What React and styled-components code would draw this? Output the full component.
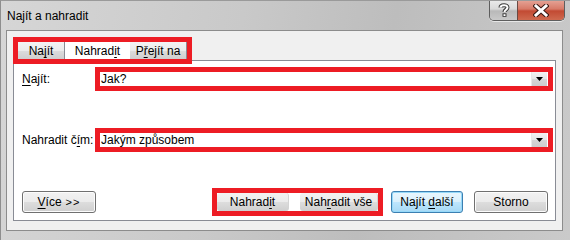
import React from 'react';
import styled, { createGlobalStyle } from 'styled-components';

const GlobalStyle = createGlobalStyle`
  body {
    margin: 0;
    font-family: "Liberation Sans", Arial, sans-serif;
    font-size: 12px;
    color: #000;
  }
`;

const RED = '#ed1c24';

const Window = styled.div`
  width: 570px;
  height: 240px;
  box-sizing: border-box;
  background: linear-gradient(100deg, #d6d6d6 0%, #c9c9c9 40%, #bdbdbd 65%, #cacaca 100%);
  border-left: 1px solid #8e8e8e;
  border-top: 1px solid #9a9a9a;
  display: flex;
  flex-direction: column;
  overflow: hidden;
`;

const TitleBar = styled.div`
  height: 29px;
  display: flex;
  justify-content: space-between;
  align-items: flex-start;
`;

const Title = styled.div`
  padding: 8px 0 0 6px;
  font-size: 12px;
  color: #000;
`;

const Caption = styled.div`
  display: flex;
  margin-right: 5px;
  margin-top: -1px;
  border: 1px solid #5e5e5e;
  border-top: none;
  border-radius: 0 0 5px 5px;
  overflow: hidden;
  box-shadow: 0 1px 0 rgba(255, 255, 255, 0.6);
`;

const CaptionButton = styled.div`
  width: ${(p) => p.$w}px;
  height: 20px;
  display: flex;
  align-items: center;
  justify-content: center;
  background: ${(p) =>
    p.$close
      ? 'linear-gradient(#e6a598 0%, #d77a68 45%, #c24a33 55%, #cf6a4f 100%)'
      : 'linear-gradient(#ececec 0%, #d9d9d9 45%, #b9b9b9 55%, #c9c9c9 100%)'};
  border-left: ${(p) => (p.$close ? '1px solid #6a4a44' : 'none')};
`;

const Client = styled.div`
  margin-left: 5px;
  width: 557px;
  height: 201px;
  box-sizing: border-box;
  background: #f0f0f0;
  border: 1px solid #8c8c8c;
  padding: 6px 0 0 6px;
  display: flex;
  flex-direction: column;
`;

const Highlight = styled.div`
  border: 5px solid ${RED};
  box-sizing: border-box;
  display: flex;
  position: relative;
  z-index: 1;
  background: ${(p) => p.$bg || 'transparent'};
`;

const TabStrip = styled(Highlight)`
  align-self: flex-start;
  width: 179px;
  height: 27px;
  margin-bottom: -4px;
  align-items: stretch;
`;

const Tab = styled.div`
  width: ${(p) => p.$w}px;
  box-sizing: border-box;
  display: flex;
  align-items: center;
  justify-content: center;
  padding-top: 1px;
  background: ${(p) => (p.$active ? '#fff' : 'linear-gradient(#f3f3f3 0%, #ebebeb 50%, #dcdcdc 51%, #cfcfcf 100%)')};
  border-right: ${(p) => (p.$active ? 'none' : '1px solid #898c95')};
`;

const Panel = styled.div`
  width: 543px;
  height: 161px;
  box-sizing: border-box;
  background: #fff;
  border: 1px solid #898c95;
  padding: 6px 2px 0 8px;
  display: flex;
  flex-direction: column;
`;

const FieldRow = styled.div`
  display: flex;
  align-items: center;
  margin-top: ${(p) => p.$top || 0}px;
`;

const Label = styled.div`
  width: 73px;
`;

const Combo = styled(Highlight)`
  width: 458px;
  height: 24px;
  background: #fff;
  align-items: center;
  justify-content: space-between;
`;

const ComboText = styled.div`
  padding-left: 1px;
`;

const DropButton = styled.div`
  width: 15px;
  height: 14px;
  margin-right: 1px;
  display: flex;
  align-items: center;
  justify-content: center;
  background: linear-gradient(#f2f2f2 0%, #e6e6e6 50%, #d6d6d6 51%, #cdcdcd 100%);
  border-left: 1px solid #e8e8e8;
`;

const ButtonRow = styled.div`
  display: flex;
  align-items: center;
  margin-top: 36px;
  padding-right: 5px;
`;

const Button = styled.div`
  width: ${(p) => p.$w}px;
  height: ${(p) => (p.$flush ? 18 : 22)}px;
  box-sizing: border-box;
  display: flex;
  align-items: center;
  justify-content: center;
  white-space: pre;
  border: ${(p) => (p.$flush ? 'none' : `1px solid ${p.$default ? '#3c7fb1' : '#707070'}`)};
  border-right: ${(p) => (p.$flush ? '1px solid #d4d4d4' : undefined)};
  border-radius: 3px;
  background: ${(p) =>
    p.$default
      ? 'linear-gradient(#eaf6fd 0%, #d9f0fc 50%, #bee6fd 51%, #a7d9f5 100%)'
      : 'linear-gradient(#f2f2f2 0%, #ebebeb 50%, #dddddd 51%, #cfcfcf 100%)'};
  box-shadow: ${(p) => (p.$default ? 'inset 0 0 0 1px #96d9f9' : p.$flush ? 'none' : 'inset 0 0 0 1px #fcfcfc')};
  margin-left: ${(p) => p.$ml || 0}px;
  padding-bottom: 1px;
`;

const ButtonGroup = styled(Highlight)`
  margin-left: auto;
  width: 171px;
  height: 28px;
  background: #fff;
  align-items: center;
  justify-content: space-between;
`;

const Key = styled.span`
  text-decoration: underline;
  text-underline-offset: 2px;
`;

const Glyph = styled.span`
  font-size: 11px;
  letter-spacing: 1px;
  margin-left: 4px;
`;

const Arrow = () => (
  <svg width="7" height="4" viewBox="0 0 7 4">
    <path d="M0 0 H7 L3.5 4 Z" fill="#000" />
  </svg>
);

export default function App() {
  return (
    <>
      <GlobalStyle />
      <Window>
        <TitleBar>
          <Title>Najít a nahradit</Title>
          <Caption>
            <CaptionButton $w={27}>
              <svg width="12" height="14" viewBox="0 0 12 14">
                <path
                  d="M2.5 4.5 C2.5 1.5 9.5 1.2 9.5 4.5 C9.5 6.6 6.5 6.8 6.5 9"
                  fill="none"
                  stroke="#3a3a3a"
                  strokeWidth="4"
                />
                <path
                  d="M2.5 4.5 C2.5 1.5 9.5 1.2 9.5 4.5 C9.5 6.6 6.5 6.8 6.5 9"
                  fill="none"
                  stroke="#fff"
                  strokeWidth="2"
                />
                <rect x="4.5" y="10.3" width="4" height="3.5" fill="#3a3a3a" />
                <rect x="5.5" y="11.2" width="2" height="1.8" fill="#fff" />
              </svg>
            </CaptionButton>
            <CaptionButton $w={46} $close>
              <svg width="16" height="13" viewBox="0 0 16 13">
                <path d="M3 2 L13 11 M13 2 L3 11" stroke="#3b1a14" strokeWidth="5" strokeLinecap="square" />
                <path d="M3 2 L13 11 M13 2 L3 11" stroke="#fff" strokeWidth="3" strokeLinecap="square" />
              </svg>
            </CaptionButton>
          </Caption>
        </TitleBar>
        <Client>
          <TabStrip>
            <Tab $w={47}>
              <span>
                Na<Key>j</Key>ít
              </span>
            </Tab>
            <Tab $w={65} $active>
              <span>
                Nahrad<Key>i</Key>t
              </span>
            </Tab>
            <Tab $w={57}>
              <span>
                P<Key>ř</Key>ejít na
              </span>
            </Tab>
          </TabStrip>
          <Panel>
            <FieldRow>
              <Label>
                <Key>N</Key>ajít:
              </Label>
              <Combo>
                <ComboText>Jak?</ComboText>
                <DropButton>
                  <Arrow />
                </DropButton>
              </Combo>
            </FieldRow>
            <FieldRow $top={37}>
              <Label>
                Nahradit č<Key>í</Key>m:
              </Label>
              <Combo>
                <ComboText>Jakým způsobem</ComboText>
                <DropButton>
                  <Arrow />
                </DropButton>
              </Combo>
            </FieldRow>
            <ButtonRow>
              <Button $w={74}>
                <span>
                  <Key>V</Key>íce<Glyph>&gt;&gt;</Glyph>
                </span>
              </Button>
              <ButtonGroup>
                <Button $w={72} $flush>
                  <span>
                    Nahrad<Key>i</Key>t
                  </span>
                </Button>
                <Button $w={78} $flush>
                  <span>
                    Nah<Key>r</Key>adit vše
                  </span>
                </Button>
              </ButtonGroup>
              <Button $w={72} $ml={8} $default>
                <span>
                  Najít <Key>d</Key>alší
                </span>
              </Button>
              <Button $w={74} $ml={11}>
                <span>Storno</span>
              </Button>
            </ButtonRow>
          </Panel>
        </Client>
      </Window>
    </>
  );
}
